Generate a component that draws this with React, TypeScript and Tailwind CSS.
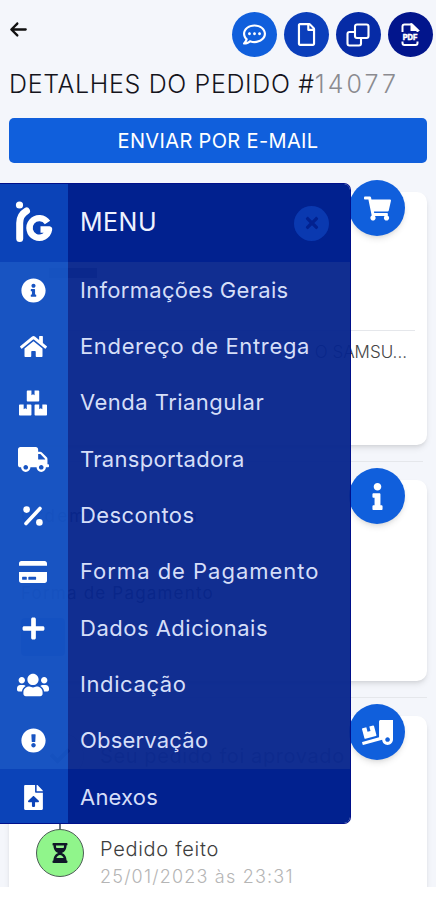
import React, { useState } from 'react';
import type { IconType } from 'react-icons';
import {
  FaBoxes,
  FaCheck,
  FaCreditCard,
  FaExclamationCircle,
  FaFileUpload,
  FaHome,
  FaHourglassHalf,
  FaInfo,
  FaInfoCircle,
  FaPlus,
  FaRegCommentDots,
  FaRegFile,
  FaShoppingCart,
  FaTimes,
  FaTruck,
  FaTruckLoading,
  FaUsers,
} from 'react-icons/fa';
import { FaArrowLeft } from 'react-icons/fa6';

type MenuItem = {
  label: string;
  icon: IconType | React.FC<{ size: number }>;
  size: number;
  tracking: string;
};

const PercentIcon = ({ size }: { size: number }) => (
  <svg width={size} height={size} viewBox="0 0 20 20" fill="white" stroke="white">
    <path d="M3 17.5L17 2.5" strokeWidth="3.6" strokeLinecap="round" />
    <circle cx="3.6" cy="3.6" r="3.3" stroke="none" />
    <circle cx="16.4" cy="16.4" r="3.3" stroke="none" />
  </svg>
);

const menuItems: MenuItem[] = [
  { label: 'Informações Gerais', icon: FaInfoCircle, size: 25, tracking: 'tracking-[0.3px]' },
  { label: 'Endereço de Entrega', icon: FaHome, size: 27, tracking: 'tracking-[0.65px]' },
  { label: 'Venda Triangular', icon: FaBoxes, size: 28, tracking: 'tracking-[0.47px]' },
  { label: 'Transportadora', icon: FaTruck, size: 31, tracking: 'tracking-[0.3px]' },
  { label: 'Descontos', icon: PercentIcon, size: 20, tracking: 'tracking-[0.4px]' },
  { label: 'Forma de Pagamento', icon: FaCreditCard, size: 28, tracking: 'tracking-[0.98px]' },
  { label: 'Dados Adicionais', icon: FaPlus, size: 25, tracking: 'tracking-[0.5px]' },
  { label: 'Indicação', icon: FaUsers, size: 32, tracking: 'tracking-[0.6px]' },
  { label: 'Observação', icon: FaExclamationCircle, size: 25, tracking: 'tracking-[0.2px]' },
  { label: 'Anexos', icon: FaFileUpload, size: 25, tracking: 'tracking-[0.2px]' },
];

const CloneIcon = () => (
  <svg width="24" height="24" viewBox="0 0 24 24" fill="none" stroke="white" strokeWidth="2.1">
    <rect x="9" y="1.5" width="13.5" height="13.5" rx="2" />
    <path d="M9 9H3.5Q1.5 9 1.5 11V20.5Q1.5 22.5 3.5 22.5H13Q15 22.5 15 20.5V15" />
  </svg>
);

const PdfIcon = () => (
  <svg width="24" height="24" viewBox="0 0 24 24" fill="none" stroke="white" strokeWidth="2">
    <path d="M4.5 9V3.5Q4.5 1.5 6.5 1.5H14L19.5 7V9" />
    <path d="M13.5 1.5V7H19.5Z" fill="white" />
    <path d="M4.5 18.5V20Q4.5 22 6.5 22H17.5Q19.5 22 19.5 20V18.5" />
    <text
      x="12"
      y="16.5"
      textAnchor="middle"
      fill="white"
      stroke="white"
      strokeWidth="0.5"
      fontSize="7.5"
      fontWeight="700"
      fontFamily="Inter"
    >
      PDF
    </text>
  </svg>
);

const Logo = () => (
  <svg className="-mt-0.5" width="38" height="42" viewBox="0 0 38 42" fill="none" stroke="white">
    <circle cx="4.5" cy="4" r="3.6" fill="white" stroke="none" />
    <path d="M4.7 37.5V22Q4.7 14 11.5 10" strokeWidth="7" strokeLinecap="round" />
    <path d="M32.5 21.5A9.8 9.8 0 1 0 34 28.5H25.5" strokeWidth="6.4" strokeLinejoin="round" />
  </svg>
);

const Badge = ({ children }: { children: React.ReactNode }) => (
  <div className="absolute -top-[12px] right-[22px] flex size-[56px] items-center justify-center rounded-full bg-[#105fdc] text-white shadow-md">
    {children}
  </div>
);

const App = () => {
  const [showMenu, setShowMenu] = useState<boolean>(true);

  return (
    <div className="relative h-[900px] w-[436px] overflow-hidden bg-white font-['Inter',sans-serif]">
      <div className="h-[887px] overflow-hidden bg-[#f4f6fb] px-[9px] pt-3">
        <header className="flex h-[45px] justify-between">
          <button className="flex h-[34px] items-center text-[#111]">
            <FaArrowLeft size={19} />
          </button>
          <div className="-mr-[5.5px] flex gap-[6.7px] text-white">
            <button className="flex size-[45px] items-center justify-center rounded-full bg-[#105fdc]">
              <FaRegCommentDots size={23} />
            </button>
            <button className="flex size-[45px] items-center justify-center rounded-full bg-[#0b3fbb]">
              <FaRegFile size={23} />
            </button>
            <button className="flex size-[45px] items-center justify-center rounded-full bg-[#062ba6]">
              <CloneIcon />
            </button>
            <button className="flex size-[45px] items-center justify-center rounded-full bg-[#02158c]">
              <PdfIcon />
            </button>
          </div>
        </header>

        <h1 className="mt-[9px] whitespace-nowrap text-[25px] leading-[36px] font-light tracking-[0.65px] text-[#14141c]">
          DETALHES DO PEDIDO #
          <span className="tracking-[3.1px] text-[#8b8b90]">14077</span>
        </h1>

        <button className="mt-4 flex h-[45px] w-full items-center justify-center rounded-[5px] bg-[#105fdc] text-[20px] tracking-[0.35px] text-white">
          ENVIAR POR E-MAIL
        </button>

        <section className="relative mt-[29px] h-[253px] rounded-[10px] bg-white px-3 pt-[76px] shadow-md">
          <Badge>
            <FaShoppingCart size={27} />
          </Badge>
          <div className="ml-[28px] h-[10px] w-[48px] bg-gray-500" />
          <div className="mt-[52px] border-t border-gray-200 pt-[9px] pr-[8px] text-right text-[17px] leading-6 font-light whitespace-nowrap text-[#444]">
            O SAMSU...
          </div>
        </section>

        <hr className="mt-[16px] mr-[4px] border-gray-200" />

        <section className="relative mt-[18px] h-[201px] rounded-[10px] bg-white px-3 pt-[24px] text-[17px] text-[#333] shadow-md">
          <Badge>
            <FaInfo size={27} />
          </Badge>
          <p className="leading-6 tracking-[2.2px]">Ordem de compra</p>
          <p className="mt-[53px] leading-6 tracking-[1.2px]">Forma de Pagamento</p>
          <div className="mt-[13px] h-[38px] w-[44px] rounded bg-[#0b3fbb]" />
        </section>

        <hr className="mt-[16px] border-gray-200" />

        <section className="relative mt-[18px] h-[260px] rounded-[10px] bg-white shadow-md">
          <Badge>
            <FaTruckLoading size={31} />
          </Badge>
          <div className="flex h-[113px] gap-4 pl-[27px]">
            <div className="flex flex-col items-center pt-[16px]">
              <div className="flex size-[48px] items-center justify-center rounded-full border border-gray-300 bg-white text-[#333]">
                <FaCheck size={20} />
              </div>
              <div className="w-[2px] flex-1 bg-gray-500" />
            </div>
            <p className="pt-[26px] text-[20px] leading-7 tracking-[0.6px] whitespace-nowrap text-[#999]">
              Seu pedido foi aprovado
            </p>
          </div>
          <div className="flex gap-4 pl-[27px]">
            <div className="flex size-[48px] items-center justify-center rounded-full border border-[#4b5d55] bg-[#90f58b] text-[#101828]">
              <FaHourglassHalf size={20} />
            </div>
            <div className="pt-[6px] font-light">
              <p className="text-[20px] leading-[28px] tracking-[0.7px] text-[#3d3d3d]">Pedido feito</p>
              <p className="text-[18px] leading-[28px] tracking-[1.2px] text-[#b5b5b5]">25/01/2023 às 23:31</p>
            </div>
          </div>
        </section>
      </div>

      {showMenu && (
        <aside className="absolute top-[183px] left-0 h-[641px] w-[351px] overflow-hidden rounded-r-[7px] border-t border-r border-b border-[#00108a]">
          <div className="flex h-[78px] bg-[#01218f]">
            <div className="flex w-[68px] items-center justify-center bg-[#0b43b8]">
              <Logo />
            </div>
            <div className="flex flex-1 items-center justify-between pr-[21px] pl-3">
              <span className="text-[25px] tracking-[0.5px] text-[#eef2ff]">MENU</span>
              <button
                onClick={() => setShowMenu(false)}
                className="flex size-[35px] items-center justify-center rounded-full bg-[#0a39b0] text-[#02218f]"
              >
                <FaTimes size={18} />
              </button>
            </div>
          </div>
          <ul>
            {menuItems.map(({ label, icon: Icon, size, tracking }) => (
              <li
                key={label}
                className="group flex h-[56.35px] cursor-pointer bg-[#07258d]/96 last:bg-[#01218f]"
              >
                <div className="flex w-[68px] items-center justify-center bg-[#1e6ee2]/60 pr-[2px] text-white group-last:bg-[#0b43b8]">
                  <Icon size={size} />
                </div>
                <span
                  className={`flex items-center pl-3 text-[22px] whitespace-nowrap text-[#d5def8] ${tracking}`}
                >
                  {label}
                </span>
              </li>
            ))}
          </ul>
        </aside>
      )}
    </div>
  );
};

export default App;
